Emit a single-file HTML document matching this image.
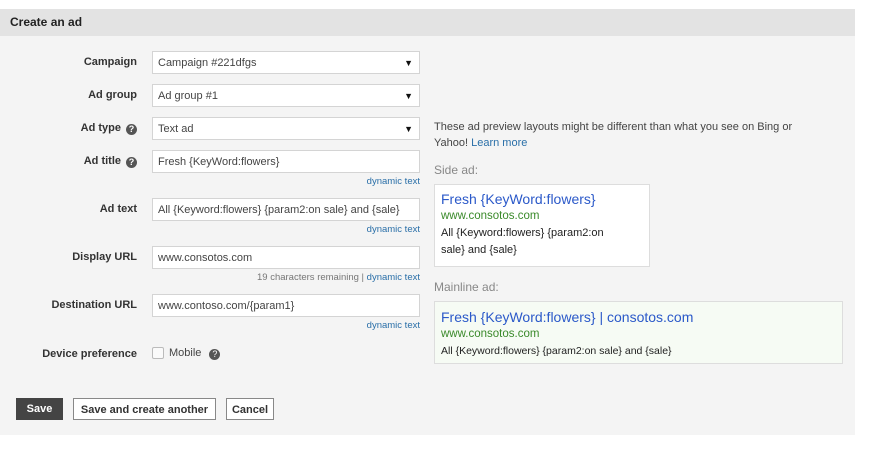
<!DOCTYPE html>
<html><head><style>
body{margin:0;width:876px;height:451px;background:#fff;font-family:"Liberation Sans",sans-serif;position:relative;overflow:hidden}
.p{position:absolute;left:0;top:9px;width:855px;height:426px;background:#f4f4f4}
.h{position:absolute;left:0;top:9px;width:855px;height:27px;background:#e3e3e3;font-weight:bold;font-size:12px;color:#222;line-height:27px;text-indent:10px}
.a{position:absolute}
.lb{position:absolute;right:739px;font-size:11px;font-weight:bold;color:#333;white-space:nowrap}
.in{position:absolute;left:152px;width:266px;height:21px;background:#fff;border:1px solid #d4d4d4;font-size:11px;color:#444;line-height:22px;text-indent:5px;box-sizing:content-box}
.in b{position:absolute;right:6px;top:0;font-size:9px;color:#111}
.dy{position:absolute;right:456px;font-size:9.5px;color:#2a6fa8}
.q{display:inline-block;width:11px;height:11px;border-radius:50%;background:#555;color:#fff;font-size:9px;line-height:11px;text-align:center;vertical-align:-1px;margin-left:5px}
.btn{position:absolute;top:398px;height:22px;line-height:22px;font-size:11px;font-weight:bold;text-align:center;box-sizing:border-box}
.bl{color:#2b59c9;font-size:14px}
.gr{color:#3a8a2a;font-size:11.5px}
.tx{color:#222;font-size:11px}
</style></head><body>
<div class="p"></div>
<div class="h">Create an ad</div>

<div class="lb" style="top:56px">Campaign</div>
<div class="in" style="top:51px">Campaign #221dfgs<b>▼</b></div>
<div class="lb" style="top:89px">Ad group</div>
<div class="in" style="top:84px">Ad group #1<b>▼</b></div>
<div class="lb" style="top:122px">Ad type<span class="q">?</span></div>
<div class="in" style="top:117px">Text ad<b>▼</b></div>
<div class="lb" style="top:155px">Ad title<span class="q">?</span></div>
<div class="in" style="top:150px">Fresh {KeyWord:flowers}</div>
<div class="dy" style="top:176px">dynamic text</div>
<div class="lb" style="top:203px">Ad text</div>
<div class="in" style="top:198px">All {Keyword:flowers} {param2:on sale} and {sale}</div>
<div class="dy" style="top:224px">dynamic text</div>
<div class="lb" style="top:251px">Display URL</div>
<div class="in" style="top:246px">www.consotos.com</div>
<div class="dy" style="top:272px"><span style="color:#777">19 characters remaining | </span>dynamic text</div>
<div class="lb" style="top:299px">Destination URL</div>
<div class="in" style="top:294px">www.contoso.com/{param1}</div>
<div class="dy" style="top:320px">dynamic text</div>
<div class="lb" style="top:348px">Device preference</div>
<div class="a" style="left:152px;top:347px;width:10px;height:10px;border:1px solid #bbb;background:#fafafa;border-radius:2px"></div>
<div class="a" style="left:169px;top:347px;font-size:11px;color:#444">Mobile<span class="q" style="margin-left:8px">?</span></div>

<div class="btn" style="left:16px;width:47px;background:#444;color:#fff">Save</div>
<div class="btn" style="left:73px;width:143px;background:#fff;border:1px solid #888;color:#333">Save and create another</div>
<div class="btn" style="left:226px;width:48px;background:#fff;border:1px solid #888;color:#333">Cancel</div>

<div class="a" style="left:434px;top:119px;font-size:11px;color:#444;line-height:16px;width:385px">These ad preview layouts might be different than what you see on Bing or Yahoo! <span style="color:#2a6fa8">Learn more</span></div>
<div class="a" style="left:434px;top:163px;font-size:12px;color:#888">Side ad:</div>
<div class="a" style="left:434px;top:184px;width:216px;height:83px;background:#fff;border:1px solid #ddd;padding:6px 0 0 6px;box-sizing:border-box;line-height:17px">
<div class="bl">Fresh {KeyWord:flowers}</div><div class="gr">www.consotos.com</div><div class="tx" style="width:175px">All {Keyword:flowers} {param2:on sale} and {sale}</div></div>
<div class="a" style="left:434px;top:280px;font-size:12px;color:#888">Mainline ad:</div>
<div class="a" style="left:434px;top:301px;width:409px;height:63px;background:#f6fbf4;border:1px solid #ddd;padding:7px 0 0 6px;box-sizing:border-box;line-height:17px">
<div class="bl">Fresh {KeyWord:flowers} | consotos.com</div><div class="gr">www.consotos.com</div><div class="tx" style="font-size:10.5px">All {Keyword:flowers} {param2:on sale} and {sale}</div></div>
</body></html>
